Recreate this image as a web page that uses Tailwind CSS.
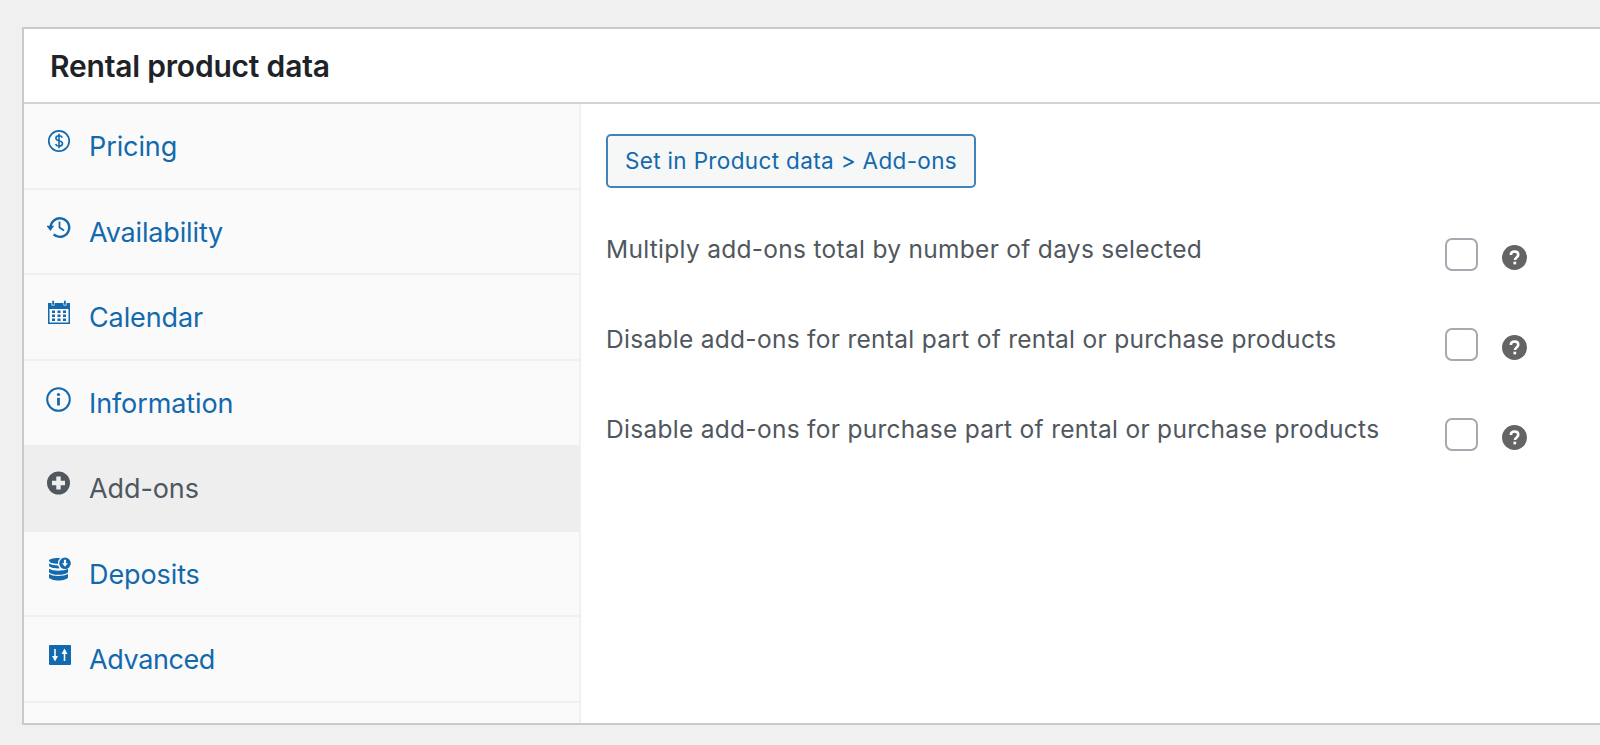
<!DOCTYPE html>
<html lang="en">
<head>
<meta charset="UTF-8">
<title>Rental product data</title>
<script src="https://cdn.jsdelivr.net/npm/@tailwindcss/browser@4"></script>
</head>
<body class="bg-[#f0f0f1] h-[745px] overflow-hidden font-['Inter',sans-serif]">
  <div class="pt-[27px] pl-[22px]">
    <div class="w-[1600px] h-[698px] bg-white border-2 border-r-0 border-[#c9cacb] flex flex-col">
      <!-- Header -->
      <div class="h-[75px] shrink-0 border-b-2 border-[#d2d3d4] pl-[26px] flex items-center">
        <h2 class="text-[30px] font-semibold text-[#1d2327] tracking-[-0.2px] pt-[1px]">Rental product data</h2>
      </div>
      <div class="flex flex-1 min-h-0">
        <!-- Tabs -->
        <div class="w-[557px] shrink-0 bg-[#fafafa] border-r-2 border-[#f0f0f0]">
          <a class="h-[85.5px] border-b-2 border-[#f0f0f0] flex items-start pl-[23px] pt-[25px] text-[#1269ae]">
            <svg viewBox="0 0 24 24" class="w-[24px] h-[24px] mr-[18px]" fill="none" stroke="currentColor" stroke-width="1.7"><circle cx="12" cy="12" r="10.200"/><path d="M15.300 8.600c-.5-1.200-1.700-1.900-3.200-1.900-1.800 0-3.200 1-3.200 2.500 0 3.300 6.600 1.900 6.600 5.300 0 1.600-1.500 2.600-3.400 2.600-1.600 0-3-.8-3.500-2.100M12 4.800v14.400" stroke-width="1.600"/></svg>
            <span class="text-[27px] leading-[36px] tracking-[-0.1px]">Pricing</span>
          </a>
          <a class="h-[85.5px] border-b-2 border-[#f0f0f0] flex items-start pl-[23px] pt-[25px] text-[#1269ae]">
            <svg viewBox="0 0 24 24" class="w-[24px] h-[24px] mr-[18px]" fill="none" stroke="currentColor" stroke-width="2.400"><path d="M3.600 12.500a9.300 9.300 0 1 1 3 6.900"/><path d="M-.5 10.800h7.700l-3.800 5.200z" fill="currentColor" stroke="none"/><path d="M12.500 6.500v6l4.500 3" stroke-width="1.800"/></svg>
            <span class="text-[27px] leading-[36px] tracking-[-0.15px]">Availability</span>
          </a>
          <a class="h-[85.5px] border-b-2 border-[#f0f0f0] flex items-start pl-[23px] pt-[25px] text-[#1269ae]">
            <svg viewBox="0 0 24 24" class="w-[24px] h-[24px] mr-[18px]" fill="currentColor"><path fill-rule="evenodd" d="M1 3h3.500v2.500h3V3h9v2.500h3V3H23v21H1zM2.500 9v13.500h19V9z"/><rect x="5.200" y="0.500" width="1.800" height="4.500" rx="0.900"/><rect x="17" y="0.500" width="1.800" height="4.500" rx="0.900"/><path d="M5 10.500h3v2.500H5zM10.500 10.500h3v2.500h-3zM16 10.500h3v2.500h-3zM5 14.500h3V17H5zM10.500 14.500h3V17h-3zM16 14.500h3V17h-3zM5 18.500h3V21H5zM10.500 18.500h3V21h-3zM16 18.500h3V21h-3z"/></svg>
            <span class="text-[27px] leading-[36px] tracking-[-0.1px]">Calendar</span>
          </a>
          <a class="h-[84.5px] flex items-start pl-[23px] pt-[25px] text-[#1269ae]">
            <svg viewBox="0 0 24 24" class="w-[24px] h-[24px] mr-[18px] overflow-visible" fill="none" stroke="currentColor" stroke-width="2"><circle cx="11.500" cy="13.500" r="11.300"/><circle cx="11.500" cy="8.500" r="1.600" fill="currentColor" stroke="none"/><path d="M11.500 11.800V19.500" stroke-width="2.800"/></svg>
            <span class="text-[27px] leading-[36px] tracking-[-0.1px]">Information</span>
          </a>
          <a class="h-[86.500px] bg-[#eeeeee] flex items-start pl-[23px] pt-[26px] text-[#50575e]">
            <svg viewBox="0 0 24 24" class="w-[24px] h-[24px] mr-[18px]" fill="currentColor"><path fill-rule="evenodd" d="M11.500 .500a11.500 11.500 0 1 0 0 23 11.500 11.500 0 0 0 0-23zM9.300 5.500h4.400v4.300H18v4.400h-4.300v4.300H9.300v-4.300H5V9.800h4.300z"/></svg>
            <span class="text-[27px] leading-[36px] tracking-[-0.1px]">Add-ons</span>
          </a>
          <a class="h-[85.5px] border-b-2 border-[#f0f0f0] flex items-start pl-[23px] pt-[25px] text-[#1269ae]">
            <svg viewBox="0 0 24 24" class="w-[24px] h-[24px] mr-[18px]" fill="currentColor"><path d="M2 3.500C2 2.200 6 1 11 1c.8 0 1.500 0 2.200.100A7 7 0 0 0 11 6.800C6 6.800 2 5.500 2 3.500z"/><path d="M2 6.500c2 1.300 5.200 2 9.200 2 .3 1 .8 2 1.500 2.800-.6.100-1.200.100-1.700.100-5 0-9-1.300-9-2.900z"/><path d="M2 11.700c2 1.300 5 2 9 2 4 0 8-.7 10-2v3c0 1.900-5 3.100-9.500 3.100S2 16.600 2 14.700z"/><path d="M2 17c2 1.300 5 2 9 2s8-.7 10-2v3.200c0 1.800-5 3.300-9.500 3.300S2 22 2 20.200z"/><path fill-rule="evenodd" d="M18 .500a5.800 5.800 0 1 0 0 11.600A5.800 5.800 0 0 0 18 .500zM16.900 2.800h2.200v3.400h1.900L18 9.800l-3-3.600h1.900z"/></svg>
            <span class="text-[27px] leading-[36px] tracking-[-0.1px]">Deposits</span>
          </a>
          <a class="h-[85.5px] border-b-2 border-[#f0f0f0] flex items-start pl-[23px] pt-[25px] text-[#1269ae]">
            <svg viewBox="0 0 24 24" class="w-[24px] h-[24px] mr-[18px]" fill="currentColor"><path fill-rule="evenodd" d="M3 3h20a1 1 0 0 1 1 1v18a1 1 0 0 1-1 1H3a1 1 0 0 1-1-1V4a1 1 0 0 1 1-1zM7.200 7v7H5l3 5.500L11 14H8.800V7zM17.500 6.500L14.500 12h2.200v7h1.600v-7h2.200z"/></svg>
            <span class="text-[27px] leading-[36px] tracking-[-0.4px]">Advanced</span>
          </a>
        </div>
        <!-- Panel -->
        <div class="flex-1 pl-[25px] pt-[30px]">
          <button class="w-[370px] h-[54px] rounded-[5px] border-2 border-[#4283ba] bg-[#f6f7f7] text-[22.5px] text-[#1269ae] tracking-[0.35px]">Set in Product data &gt; Add-ons</button>
          <div class="mt-[45px] flex h-[90px]">
            <span class="w-[839px] text-[24.5px] leading-[32px] text-[#50575e] tracking-[0.29px]">Multiply add-ons total by number of days selected</span>
            <span class="w-[33px] h-[33px] mt-[5px] rounded-[7px] border-2 border-[#a7a8b0] bg-white"></span>
            <svg viewBox="0 0 24 24" class="w-[25px] h-[25px] ml-[24px] mt-[12px]"><circle cx="12" cy="12" r="12" fill="#646464"/><path d="M8.500 9.500c0-2 1.600-3.200 3.600-3.200s3.500 1.200 3.500 3c0 2.600-3.100 2.600-3.100 5" fill="none" stroke="#fff" stroke-width="2.500"/><rect x="11" y="16" width="2.600" height="2.600" fill="#fff"/></svg>
          </div>
          <div class="flex h-[90px]">
            <span class="w-[839px] text-[24.5px] leading-[32px] text-[#50575e] tracking-[0.29px]">Disable add-ons for rental part of rental or purchase products</span>
            <span class="w-[33px] h-[33px] mt-[5px] rounded-[7px] border-2 border-[#a7a8b0] bg-white"></span>
            <svg viewBox="0 0 24 24" class="w-[25px] h-[25px] ml-[24px] mt-[12px]"><circle cx="12" cy="12" r="12" fill="#646464"/><path d="M8.500 9.500c0-2 1.600-3.200 3.600-3.200s3.500 1.200 3.500 3c0 2.600-3.100 2.600-3.100 5" fill="none" stroke="#fff" stroke-width="2.500"/><rect x="11" y="16" width="2.600" height="2.600" fill="#fff"/></svg>
          </div>
          <div class="flex h-[90px]">
            <span class="w-[839px] text-[24.5px] leading-[32px] text-[#50575e] tracking-[0.29px]">Disable add-ons for purchase part of rental or purchase products</span>
            <span class="w-[33px] h-[33px] mt-[5px] rounded-[7px] border-2 border-[#a7a8b0] bg-white"></span>
            <svg viewBox="0 0 24 24" class="w-[25px] h-[25px] ml-[24px] mt-[12px]"><circle cx="12" cy="12" r="12" fill="#646464"/><path d="M8.500 9.500c0-2 1.600-3.200 3.600-3.200s3.500 1.200 3.500 3c0 2.600-3.100 2.600-3.100 5" fill="none" stroke="#fff" stroke-width="2.500"/><rect x="11" y="16" width="2.600" height="2.600" fill="#fff"/></svg>
          </div>
        </div>
      </div>
    </div>
  </div>
</body>
</html>
